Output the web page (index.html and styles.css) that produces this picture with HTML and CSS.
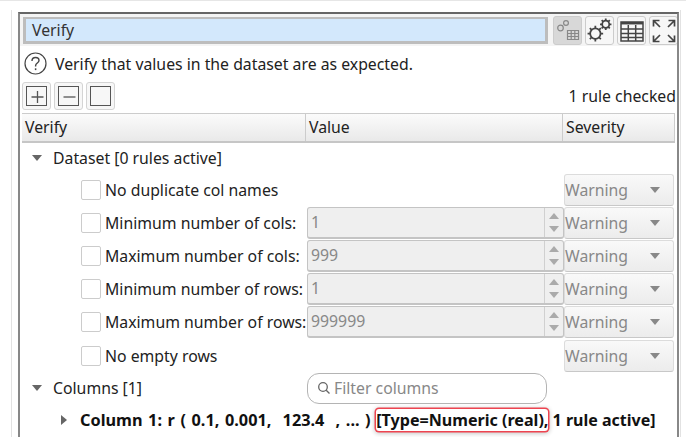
FILE: index.html
```html
<!DOCTYPE html>
<html lang="en">
<head>
    <meta charset="UTF-8">
    <title>Verify</title>
    <link rel="stylesheet" href="styles.css">
</head>
<body>

<div class="frame">
<div class="window">
    <div class="title-row">
        <div class="title-bar">Verify</div>
        <button class="tool-btn active">
            <svg width="26" height="26" viewBox="0 0 26 26" fill="none" stroke="#888" stroke-width="1.2">
                <circle cx="5.500" cy="10" r="2.800"/>
                <circle cx="11" cy="5" r="2.400"/>
                <path d="M12.500 12.500h11v9h-11zM12.500 15.500h11M12.500 18.500h11M16.200 12.500v9M19.800 12.500v9"/>
            </svg>
        </button>
        <button class="tool-btn">
            <svg width="27" height="27" viewBox="0 0 26 26" fill="none" stroke="#444" stroke-width="1.7">
                <circle cx="9" cy="16" r="5"/>
                <path d="M9 8.500v2.500M9 21v2.500M1.500 16h2.500M14 16h2.500M3.700 10.700l1.800 1.800M12.500 19.500l1.800 1.800M3.700 21.300l1.800-1.800M12.500 12.500l1.800-1.800"/>
                <circle cx="19" cy="7" r="3.400"/>
                <path d="M19 1.500v2M19 10.500v2M13.500 7h2M22.500 7h2M15.100 3.100l1.400 1.400M21.500 9.500l1.400 1.400M15.100 10.900l1.400-1.400M21.500 4.500l1.400-1.400"/>
            </svg>
        </button>
        <button class="tool-btn">
            <svg width="26" height="24" viewBox="0 0 26 24" fill="none" stroke="#444" stroke-width="1.500">
                <path d="M2 3h22v19h-22z"/>
                <path d="M2 4.200h22" stroke-width="2.500"/>
                <path d="M2 10h22M2 14.500h22M2 18.500h22M9.300 6v16M16.700 6v16"/>
            </svg>
        </button>
        <button class="tool-btn">
            <svg width="26" height="26" viewBox="0 0 26 26" fill="none" stroke="#444" stroke-width="1.700">
                <path d="M2.500 8.500v-6h6M2.500 2.500l6.500 6.500"/>
                <path d="M23.500 8.500v-6h-6M23.500 2.500l-6.500 6.500"/>
                <path d="M2.500 17.500v6h6M2.500 23.500l6.500-6.500"/>
                <path d="M23.500 17.500v6h-6M23.500 23.500l-6.500-6.500"/>
            </svg>
        </button>
    </div>

    <div class="help-row">
        <svg class="help-icon" width="23" height="23" viewBox="0 0 23 23" fill="none" stroke="#444" stroke-width="1.200">
            <circle cx="11.500" cy="11.500" r="10.500"/>
            <path d="M8 9c0-2.200 1.600-3.500 3.600-3.500s3.400 1.300 3.400 3c0 2.500-3.400 2.600-3.400 5.200v0.800" stroke-width="1.400"/>
            <path d="M11.600 16.300v1.800" stroke-width="1.500"/>
        </svg>
        <span>Verify that values in the dataset are as expected.</span>
    </div>

    <div class="action-row">
        <button class="small-btn"><span class="box">
            <svg width="21" height="20" viewBox="0 0 21 20" stroke="#555" stroke-width="1.300"><path d="M10.500 4v12M4.500 10h12"/></svg>
        </span></button>
        <button class="small-btn"><span class="box">
            <svg width="21" height="20" viewBox="0 0 21 20" stroke="#555" stroke-width="1.300"><path d="M4.500 10h12"/></svg>
        </span></button>
        <button class="small-btn"><span class="box"></span></button>
        <span class="checked-count">1 rule checked</span>
    </div>

    <div class="table-head">
        <div class="head-cell">Verify</div>
        <div class="head-cell">Value</div>
        <div class="head-cell">Severity</div>
    </div>

    <div class="tree">
        <div class="group-row"><span class="arrow-down"></span>Dataset [0 rules active]</div>

        <div class="rule-row">
            <label class="rule-name"><span class="check"></span>No duplicate col names</label>
            <div></div>
            <div class="select">Warning<span class="select-arrow"></span></div>
        </div>
        <div class="rule-row">
            <label class="rule-name"><span class="check"></span>Minimum number of cols:</label>
            <div class="spinner"><span class="spinner-value">1</span><span class="spinner-btns"><i class="up"></i><i class="down"></i></span></div>
            <div class="select">Warning<span class="select-arrow"></span></div>
        </div>
        <div class="rule-row">
            <label class="rule-name"><span class="check"></span>Maximum number of cols:</label>
            <div class="spinner"><span class="spinner-value">999</span><span class="spinner-btns"><i class="up"></i><i class="down"></i></span></div>
            <div class="select">Warning<span class="select-arrow"></span></div>
        </div>
        <div class="rule-row">
            <label class="rule-name"><span class="check"></span>Minimum number of rows:</label>
            <div class="spinner"><span class="spinner-value">1</span><span class="spinner-btns"><i class="up"></i><i class="down"></i></span></div>
            <div class="select">Warning<span class="select-arrow"></span></div>
        </div>
        <div class="rule-row">
            <label class="rule-name"><span class="check"></span>Maximum number of rows:</label>
            <div class="spinner"><span class="spinner-value">999999</span><span class="spinner-btns"><i class="up"></i><i class="down"></i></span></div>
            <div class="select">Warning<span class="select-arrow"></span></div>
        </div>
        <div class="rule-row">
            <label class="rule-name"><span class="check"></span>No empty rows</label>
            <div></div>
            <div class="select">Warning<span class="select-arrow"></span></div>
        </div>

        <div class="columns-row">
            <div class="group-label"><span class="arrow-down"></span>Columns [1]</div>
            <div class="filter">
                <svg width="14" height="14" viewBox="0 0 14 14" fill="none" stroke="#666" stroke-width="1.300">
                    <circle cx="6" cy="6" r="4.300"/>
                    <path d="M9.200 9.200l3.300 3.300"/>
                </svg>
                <span>Filter columns</span>
            </div>
        </div>

        <div class="column-row">
            <span class="arrow-right"></span>
            <span><span class="column-name">Column 1: r ( 0.1, 0.001,&nbsp; 123.4&nbsp; , ... )&nbsp;</span><span class="type-mark">[Type=Numeric (real),</span> 1 rule active]</span>
        </div>
    </div>
</div>
</div>

</body>
</html>
```

FILE: styles.css
```css
* {
    box-sizing: border-box;
}

body {
    margin: 0;
    width: 686px;
    height: 442px;
    overflow: hidden;
    background-color: #fff;
    font-family: "Noto Sans", sans-serif;
    font-size: 15.800px;
    color: #222;
    padding: 9px 5px 5px 11px;
    border-top: 1px solid #e6e6e6;
}

.frame {
    height: 100%;
    padding: 2px 1px 0 6px;
    border-left: 1px solid #e2e2e2;
    border-right: 1px solid #e2e2e2;
}

.window {
    height: 100%;
    border-top: 2px solid #666;
    border-left: 2px solid #888;
    border-right: 2px solid #888;
    overflow: hidden;
}

.title-row {
    display: flex;
    align-items: center;
    height: 32px;
    padding: 1px 0 0 3px;
    background-color: #f4f4f4;
}

.title-bar {
    flex: none;
    width: 525px;
    height: 27px;
    margin-right: 5px;
    padding-left: 6px;
    line-height: 22px;
    background-color: #d3e8fc;
    border: 3px solid #bdbdbd;
    border-top-width: 2px;
    color: #333;
}

.tool-btn {
    flex: none;
    display: flex;
    align-items: center;
    justify-content: center;
    width: 29px;
    height: 29px;
    margin-right: 3px;
    padding: 0;
    background-color: #f7f7f7;
    border: 1px solid #ccc;
    border-radius: 3px;
}

.tool-btn:last-child {
    margin-right: 0;
}

.tool-btn.active {
    background-color: #d8d8d8;
}

.help-row {
    display: flex;
    align-items: center;
    gap: 8px;
    height: 35px;
    padding-left: 4px;
}

.action-row {
    display: flex;
    align-items: center;
    gap: 3px;
    height: 32px;
    padding: 0 0 3px 2px;
}

.small-btn {
    width: 29px;
    height: 28px;
    padding: 3px;
    background-color: #f7f7f7;
    border: 1px solid #d4d4d4;
    border-radius: 3px;
}

.box {
    display: block;
    width: 100%;
    height: 100%;
    border: 1px solid #555;
}

.box svg {
    display: block;
}

.checked-count {
    margin-left: auto;
    padding-right: 1px;
}

.table-head {
    display: grid;
    grid-template-columns: 284px 257px 112px;
    height: 30px;
    margin: 0 2px;
    border-top: 1px solid #ccc;
    border-bottom: 2px solid #c6c6c6;
    background: linear-gradient(#fbfbfb, #e9e9e9);
}

.head-cell {
    padding-left: 3px;
    line-height: 27px;
    border-right: 1px solid #ccc;
}

.tree {
    padding: 1px 0 0 2px;
}

.group-row {
    display: flex;
    align-items: center;
    height: 28px;
    margin-bottom: 1px;
}

.arrow-down {
    width: 0;
    height: 0;
    margin: 0 11px 0 10px;
    border-left: 5px solid transparent;
    border-right: 5px solid transparent;
    border-top: 6px solid #666;
}

.arrow-right {
    width: 0;
    height: 0;
    margin: 0 13px 0 39px;
    border-top: 5px solid transparent;
    border-bottom: 5px solid transparent;
    border-left: 6px solid #666;
}

.rule-row {
    display: grid;
    grid-template-columns: 285px 257px 110px;
    align-items: center;
    height: 33.200px;
}

.rule-name {
    display: flex;
    align-items: center;
    gap: 4px;
    padding-left: 59px;
    white-space: nowrap;
}

.check {
    flex: none;
    width: 20px;
    height: 20px;
    background-color: #fff;
    border: 1px solid #ccc;
    border-radius: 2px;
}

.spinner {
    display: flex;
    height: 32px;
    background-color: #efefef;
    border: 1px solid #c4c4c4;
    border-bottom-width: 2px;
    border-radius: 3px;
    color: #888;
}

.spinner-value {
    flex: 1;
    padding-left: 3px;
    line-height: 29px;
}

.spinner-btns {
    display: flex;
    flex-direction: column;
    align-items: center;
    justify-content: center;
    gap: 7px;
    width: 19px;
    border-left: 1px solid #d0d0d0;
}

.spinner-btns i {
    width: 0;
    height: 0;
    border-left: 5px solid transparent;
    border-right: 5px solid transparent;
}

.spinner-btns .up {
    border-bottom: 6px solid #aaa;
}

.spinner-btns .down {
    border-top: 6px solid #aaa;
}

.select {
    display: flex;
    align-items: center;
    justify-content: space-between;
    height: 32px;
    padding: 0 13px 0 0;
    background: linear-gradient(#f9f9f9, #ececec);
    border: 1px solid #dcdcdc;
    border-bottom: 1px solid #c8c8c8;
    border-radius: 3px;
    color: #888;
}

.select-arrow {
    width: 0;
    height: 0;
    border-left: 5px solid transparent;
    border-right: 5px solid transparent;
    border-top: 6px solid #888;
}

.columns-row {
    display: grid;
    grid-template-columns: 285px 240px;
    align-items: center;
    height: 32px;
}

.group-label {
    display: flex;
    align-items: center;
}

.filter {
    display: flex;
    align-items: center;
    gap: 3px;
    height: 31px;
    padding-left: 9px;
    background-color: #fff;
    border: 1px solid #b4b4b4;
    border-radius: 12px;
    color: #888;
}

.column-row {
    display: flex;
    align-items: center;
    height: 32px;
    font-size: 16px;
    font-weight: bold;
    white-space: nowrap;
    color: #111;
}

.column-name {
    font-size: 16.300px;
    word-spacing: 1.350px;
}

.type-mark {
    font-size: 16.100px;
    border-radius: 3px;
    box-shadow: 0 0 0 1.500px #ee4450, 0 1px 4px 2px rgba(0, 0, 0, 0.2);
}
```
